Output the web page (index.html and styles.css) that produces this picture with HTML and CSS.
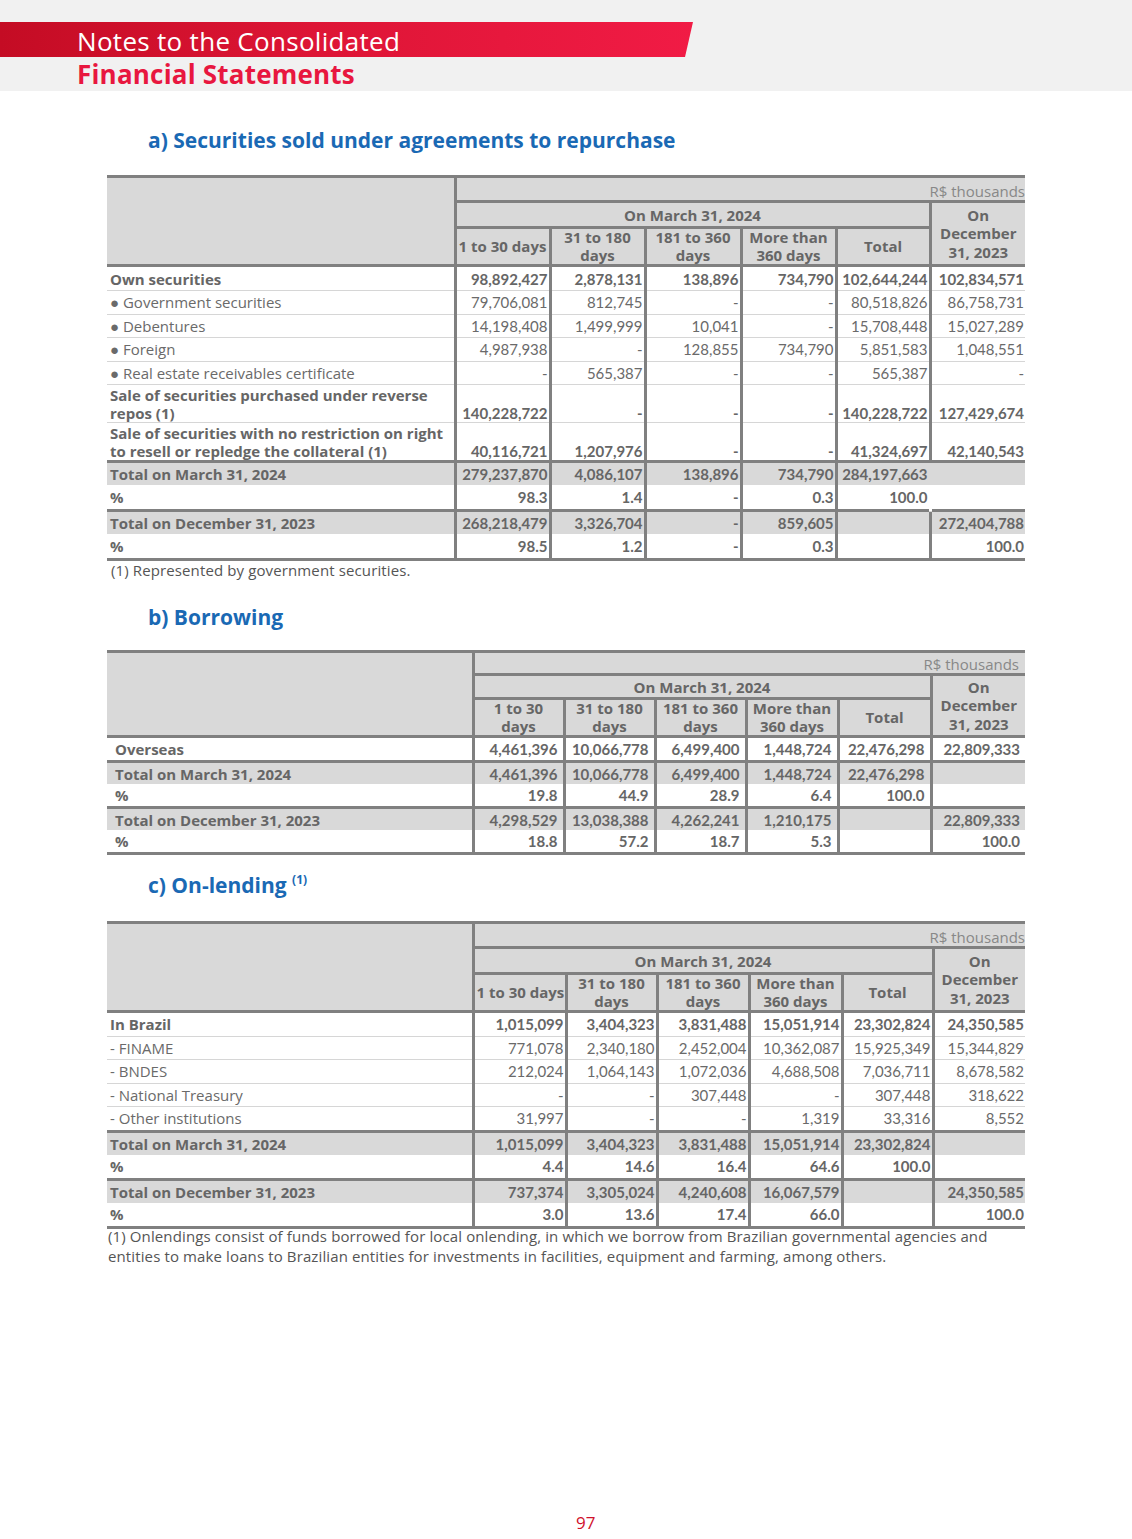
FILE: index.html
```html
<!DOCTYPE html>
<html>
<head>
<meta charset="utf-8">
<link rel="stylesheet" href="styles.css">
</head>
<body>
<header class="top">
  <div class="band"><span class="t1">Notes to the Consolidated</span></div>
  <div class="t2">Financial Statements</div>
</header>
<main class="page">
  <h2 class="sec sec-a">a) Securities sold under agreements to repurchase</h2>
  <table class="tbl tbl-a">
    <colgroup><col class="ca0"><col class="ca1"><col class="ca1"><col class="ca2"><col class="ca1"><col class="ca3"><col class="ca1"></colgroup>
    <tr class="h1">
      <td class="hl" rowspan="3"></td>
      <td class="unit" colspan="6">R$ thousands</td>
    </tr>
    <tr class="h2">
      <td class="grp" colspan="5">On March 31, 2024</td>
      <td class="dec" rowspan="2">On<br>December<br>31, 2023</td>
    </tr>
    <tr class="h3">
      <td class="ch">1 to 30 days</td>
      <td class="ch">31 to 180<br>days</td>
      <td class="ch">181 to 360<br>days</td>
      <td class="ch">More than<br>360 days</td>
      <td class="ch">Total</td>
    </tr>
    <tr class="b first"><td class="l">Own securities</td><td class="n">98,892,427</td><td class="n">2,878,131</td><td class="n">138,896</td><td class="n">734,790</td><td class="n">102,644,244</td><td class="n">102,834,571</td></tr>
    <tr class="r"><td class="l">&#9679; Government securities</td><td class="n">79,706,081</td><td class="n">812,745</td><td class="n">-</td><td class="n">-</td><td class="n">80,518,826</td><td class="n">86,758,731</td></tr>
    <tr class="r"><td class="l">&#9679; Debentures</td><td class="n">14,198,408</td><td class="n">1,499,999</td><td class="n">10,041</td><td class="n">-</td><td class="n">15,708,448</td><td class="n">15,027,289</td></tr>
    <tr class="r"><td class="l">&#9679; Foreign</td><td class="n">4,987,938</td><td class="n">-</td><td class="n">128,855</td><td class="n">734,790</td><td class="n">5,851,583</td><td class="n">1,048,551</td></tr>
    <tr class="r"><td class="l">&#9679; Real estate receivables certificate</td><td class="n">-</td><td class="n">565,387</td><td class="n">-</td><td class="n">-</td><td class="n">565,387</td><td class="n">-</td></tr>
    <tr class="b two"><td class="l">Sale of securities purchased under reverse<br>repos (1)</td><td class="n">140,228,722</td><td class="n">-</td><td class="n">-</td><td class="n">-</td><td class="n">140,228,722</td><td class="n">127,429,674</td></tr>
    <tr class="b two"><td class="l">Sale of securities with no restriction on right<br>to resell or repledge the collateral (1)</td><td class="n">40,116,721</td><td class="n">1,207,976</td><td class="n">-</td><td class="n">-</td><td class="n">41,324,697</td><td class="n">42,140,543</td></tr>
    <tr class="tot"><td class="l">Total on March 31, 2024</td><td class="n">279,237,870</td><td class="n">4,086,107</td><td class="n">138,896</td><td class="n">734,790</td><td class="n">284,197,663</td><td class="n nb"></td></tr>
    <tr class="pct"><td class="l">%</td><td class="n">98.3</td><td class="n">1.4</td><td class="n">-</td><td class="n">0.3</td><td class="n">100.0</td><td class="n nb"></td></tr>
    <tr class="tot"><td class="l">Total on December 31, 2023</td><td class="n">268,218,479</td><td class="n">3,326,704</td><td class="n">-</td><td class="n">859,605</td><td class="n"></td><td class="n">272,404,788</td></tr>
    <tr class="pct last"><td class="l">%</td><td class="n">98.5</td><td class="n">1.2</td><td class="n">-</td><td class="n">0.3</td><td class="n"></td><td class="n">100.0</td></tr>
  </table>
  <p class="note note-a">(1) Represented by government securities.</p>

  <h2 class="sec sec-b">b) Borrowing</h2>
  <table class="tbl tbl-b">
    <colgroup><col class="cb0"><col class="cb1"><col class="cb1"><col class="cb1"><col class="cb2"><col class="cb3"><col class="cb4"></colgroup>
    <tr class="h1">
      <td class="hl" rowspan="3"></td>
      <td class="unit" colspan="6">R$ thousands</td>
    </tr>
    <tr class="h2">
      <td class="grp" colspan="5">On March 31, 2024</td>
      <td class="dec" rowspan="2">On<br>December<br>31, 2023</td>
    </tr>
    <tr class="h3">
      <td class="ch">1 to 30<br>days</td>
      <td class="ch">31 to 180<br>days</td>
      <td class="ch">181 to 360<br>days</td>
      <td class="ch">More than<br>360 days</td>
      <td class="ch">Total</td>
    </tr>
    <tr class="b first"><td class="l">Overseas</td><td class="n">4,461,396</td><td class="n">10,066,778</td><td class="n">6,499,400</td><td class="n">1,448,724</td><td class="n">22,476,298</td><td class="n">22,809,333</td></tr>
    <tr class="tot"><td class="l">Total on March 31, 2024</td><td class="n">4,461,396</td><td class="n">10,066,778</td><td class="n">6,499,400</td><td class="n">1,448,724</td><td class="n">22,476,298</td><td class="n"></td></tr>
    <tr class="pct"><td class="l">%</td><td class="n">19.8</td><td class="n">44.9</td><td class="n">28.9</td><td class="n">6.4</td><td class="n">100.0</td><td class="n"></td></tr>
    <tr class="tot"><td class="l">Total on December 31, 2023</td><td class="n">4,298,529</td><td class="n">13,038,388</td><td class="n">4,262,241</td><td class="n">1,210,175</td><td class="n"></td><td class="n">22,809,333</td></tr>
    <tr class="pct last"><td class="l">%</td><td class="n">18.8</td><td class="n">57.2</td><td class="n">18.7</td><td class="n">5.3</td><td class="n"></td><td class="n">100.0</td></tr>
  </table>

  <h2 class="sec sec-c">c) On-lending <sup>(1)</sup></h2>
  <table class="tbl tbl-c">
    <colgroup><col class="cc0"><col class="cc1"><col class="cc2"><col class="cc3"><col class="cc1"><col class="cc2"><col class="cc3"></colgroup>
    <tr class="h1">
      <td class="hl" rowspan="3"></td>
      <td class="unit" colspan="6">R$ thousands</td>
    </tr>
    <tr class="h2">
      <td class="grp" colspan="5">On March 31, 2024</td>
      <td class="dec" rowspan="2">On<br>December<br>31, 2023</td>
    </tr>
    <tr class="h3">
      <td class="ch">1 to 30 days</td>
      <td class="ch">31 to 180<br>days</td>
      <td class="ch">181 to 360<br>days</td>
      <td class="ch">More than<br>360 days</td>
      <td class="ch">Total</td>
    </tr>
    <tr class="b first"><td class="l">In Brazil</td><td class="n">1,015,099</td><td class="n">3,404,323</td><td class="n">3,831,488</td><td class="n">15,051,914</td><td class="n">23,302,824</td><td class="n">24,350,585</td></tr>
    <tr class="r"><td class="l">- FINAME</td><td class="n">771,078</td><td class="n">2,340,180</td><td class="n">2,452,004</td><td class="n">10,362,087</td><td class="n">15,925,349</td><td class="n">15,344,829</td></tr>
    <tr class="r"><td class="l">- BNDES</td><td class="n">212,024</td><td class="n">1,064,143</td><td class="n">1,072,036</td><td class="n">4,688,508</td><td class="n">7,036,711</td><td class="n">8,678,582</td></tr>
    <tr class="r"><td class="l">- National Treasury</td><td class="n">-</td><td class="n">-</td><td class="n">307,448</td><td class="n">-</td><td class="n">307,448</td><td class="n">318,622</td></tr>
    <tr class="r"><td class="l">- Other institutions</td><td class="n">31,997</td><td class="n">-</td><td class="n">-</td><td class="n">1,319</td><td class="n">33,316</td><td class="n">8,552</td></tr>
    <tr class="tot"><td class="l">Total on March 31, 2024</td><td class="n">1,015,099</td><td class="n">3,404,323</td><td class="n">3,831,488</td><td class="n">15,051,914</td><td class="n">23,302,824</td><td class="n"></td></tr>
    <tr class="pct"><td class="l">%</td><td class="n">4.4</td><td class="n">14.6</td><td class="n">16.4</td><td class="n">64.6</td><td class="n">100.0</td><td class="n"></td></tr>
    <tr class="tot"><td class="l">Total on December 31, 2023</td><td class="n">737,374</td><td class="n">3,305,024</td><td class="n">4,240,608</td><td class="n">16,067,579</td><td class="n"></td><td class="n">24,350,585</td></tr>
    <tr class="pct last"><td class="l">%</td><td class="n">3.0</td><td class="n">13.6</td><td class="n">17.4</td><td class="n">66.0</td><td class="n"></td><td class="n">100.0</td></tr>
  </table>
  <p class="note note-c">(1) Onlendings consist of funds borrowed for local onlending, in which we borrow from Brazilian governmental agencies and<br>entities to make loans to Brazilian entities for investments in facilities, equipment and farming, among others.</p>
</main>
<footer class="pageno">97</footer>
</body>
</html>
```

FILE: styles.css
```css
html, body { margin: 0; padding: 0; background: #fff; }
body {
  font-family: "Open Sans", Lato, sans-serif;
  color: #666;
  min-height: 1539px;
  display: flex;
  flex-direction: column;
}

.top {
  background: #f1f1f1;
  height: 91px;
  padding-top: 22px;
  box-sizing: border-box;
  flex: none;
}
.band {
  width: 693px;
  height: 35px;
  box-sizing: border-box;
  padding: 3px 0 0 77px;
  background: linear-gradient(90deg, #c40c24 0%, #dd1535 45%, #f11b45 100%);
  clip-path: polygon(0 0, 100% 0, calc(100% - 8px) 100%, 0 100%);
}
.t1 {
  display: block;
  color: #fff;
  font-family: "Open Sans", sans-serif;
  font-size: 26px;
  line-height: 32px;
  letter-spacing: 0.3px;
}
.t2 {
  color: #e8173f;
  font-family: "Open Sans", sans-serif;
  font-weight: 700;
  font-size: 26px;
  line-height: 34px;
  padding-left: 77px;
  letter-spacing: 0.2px;
}

.page {
  padding: 0 0 0 107px;
  width: 918px;
  flex: 1 0 auto;
}

.sec {
  margin: 0;
  padding-left: 41px;
  font-family: "Open Sans", sans-serif;
  font-weight: 700;
  font-size: 21px;
  line-height: 28px;
  color: #1a69b4;
}
.sec sup { font-size: 12px; vertical-align: 9px; line-height: 0; font-weight: 700; }
.sec-a { margin-top: 35px; margin-bottom: 21px; }
.sec-b { margin-top: 24px; margin-bottom: 19px; }
.sec-c { margin-top: 16px; margin-bottom: 22px; }

.tbl {
  width: 918px;
  table-layout: fixed;
  border-collapse: collapse;
  font-family: "Open Sans", sans-serif;
  font-size: 15px;
  color: #666;
}
.tbl td {
  padding: 0 2px;
  line-height: 18px;
  white-space: nowrap;
}
.ca0 { width: 348px; } .ca1 { width: 95px; } .ca2 { width: 96px; } .ca3 { width: 94px; }
.cb0 { width: 366px; } .cb1 { width: 91px; } .cb2 { width: 92px; } .cb3 { width: 93px; } .cb4 { width: 94px; }
.cc0 { width: 366px; } .cc1 { width: 93px; } .cc2 { width: 91px; } .cc3 { width: 92px; }

/* header */
.h1 td { border-top: 3px solid #808080; }
.hl { background: #d9d9d9; border-bottom: 3px solid #808080; }
.unit {
  background: #d9d9d9;
  text-align: right;
  font-weight: 400;
  font-size: 15px;
  color: #888;
  height: 22px;
  border-left: 3px solid #808080;
  border-bottom: 3px solid #808080;
  vertical-align: bottom;
  padding-right: 0 !important;
}
.grp {
  background: #d9d9d9;
  text-align: center;
  font-weight: 700;
  height: 23px;
  border-left: 3px solid #808080;
  border-bottom: 3px solid #808080;
}
.dec {
  background: #d9d9d9;
  text-align: center;
  font-weight: 700;
  border-left: 3px solid #808080;
  border-bottom: 3px solid #808080;
  line-height: 18.5px !important;
}
.ch {
  background: #d9d9d9;
  text-align: center;
  font-weight: 700;
  height: 35px;
  line-height: 17.5px !important;
  border-left: 3px solid #808080;
  border-bottom: 3px solid #808080;
}

/* body */
.tbl .l { padding-left: 3px; }
.tbl .n {
  text-align: right;
  border-left: 3px solid #808080;
  padding-right: 1px;
  font-family: Lato, sans-serif;
  font-size: 15px;
}
.tbl .nb { border-left-color: transparent; }
.b td { height: 23px; border-bottom: 1px solid #d6d6d6; }
.b .l { font-weight: 700; }
.b .n { font-weight: 700; }
.r td { font-weight: 400; height: 22.5px; border-bottom: 1px solid #d6d6d6; color: #6a6a6a; }
.two td { height: 37px; vertical-align: bottom; }
.two .l { vertical-align: middle; }
.tot td { background: #d9d9d9; height: 22px; border-top: 3px solid #808080; }
.tot .l, .pct .l { font-weight: 700; }
.tot .n, .pct .n { font-weight: 700; }
.pct td { height: 23px; }
.last td { border-bottom: 3px solid #808080; }
.tbl-a .pct td { height: 24px; }

/* table b */
.tbl-b .l { padding-left: 8px; }
.tbl-b .n { padding-right: 5px; }
.tbl-b .ch { padding: 0 4px; }
.tbl-b .unit { height: 20px; padding-right: 6px !important; }
.tbl-b .grp { height: 21px; }
.tbl-b .first td { height: 22px; border-bottom: 3px solid #808080; }
.tbl-b .tot td { height: 21px; }
.tbl-b .pct td { height: 22px; }

/* table c */
.tbl-c .first td { height: 22.5px; }

.note {
  margin: 0;
  font-family: "Open Sans", sans-serif;
  font-size: 15px;
  line-height: 20px;
  color: #555;
  white-space: nowrap;
  letter-spacing: 0.12px;
}
.note-a { padding-left: 4px; line-height: 18px; }
.note-c { padding-left: 1px; margin-top: -3px; }

.pageno {
  flex: none;
  padding: 0 0 6px 576px;
  color: #d0112b;
  font-family: "Open Sans", sans-serif;
  font-size: 17px;
  line-height: 20px;
}
```
